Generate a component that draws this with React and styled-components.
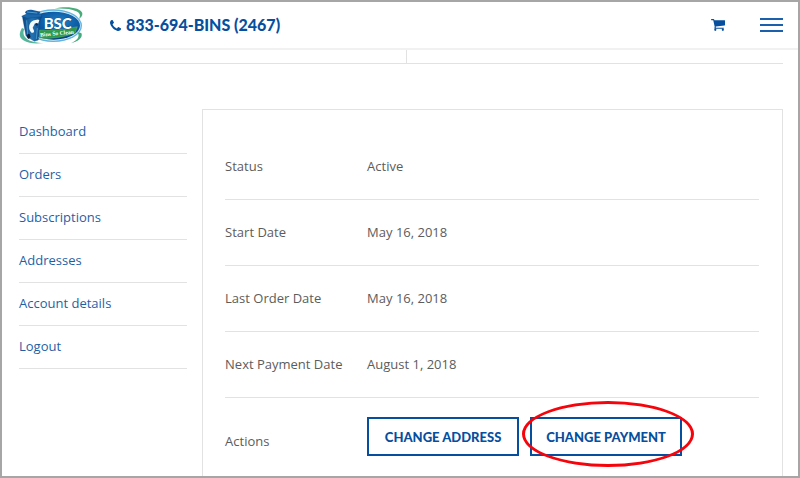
import React from "react";
import styled, { createGlobalStyle } from "styled-components";

const GlobalStyle = createGlobalStyle`
  * {
    box-sizing: border-box;
  }
  body {
    margin: 0;
    background-color: #fff;
    color: #5c5c5c;
    font-family: "Open Sans", "Noto Sans", sans-serif;
    font-size: 13px;
    line-height: 20px;
  }
`;

const Page = styled.div`
  display: flex;
  flex-direction: column;
  min-height: 100vh;
  border: 2px solid #a6a6a6;
`;

const Header = styled.header`
  display: flex;
  align-items: center;
  height: 48px;
  padding: 0 15px 0 17px;
  border-bottom: 2px solid #f1f1f1;
`;

const LogoLink = styled.a`
  display: flex;
  margin-right: 24px;
`;

const Phone = styled.a`
  display: flex;
  align-items: center;
  gap: 5px;
  color: #064f9e;
  font-family: Lato, sans-serif;
  font-size: 16px;
  font-weight: 900;
  text-decoration: none;
`;

const HeaderTools = styled.div`
  display: flex;
  align-items: center;
  gap: 35px;
  margin-left: auto;
`;

const CartLink = styled.a`
  display: flex;
  color: #064f9e;
`;

const MenuButton = styled.button`
  display: flex;
  flex-direction: column;
  gap: 4px;
  width: 23px;
  padding: 0;
  border: 0;
  background: none;
  cursor: pointer;
`;

const MenuBar = styled.span`
  height: 2px;
  background-color: #1a60aa;
`;

const Strip = styled.div`
  display: flex;
  height: 14px;
  margin: 0 15px 0 17px;
  border-bottom: 1px solid #e2e2e2;
`;

const StripCell = styled.div`
  width: calc(50% + 6px);
  border-right: 1px solid #e2e2e2;
`;

const Main = styled.main`
  display: flex;
  flex: 1;
  gap: 15px;
  padding: 45px 15px 0 17px;
`;

const Menu = styled.ul`
  flex: 0 0 22%;
  margin: 2px 0 0;
  padding: 0;
  list-style: none;
`;

const MenuItem = styled.li`
  height: 43px;
  padding-top: 10px;
  border-bottom: 1px solid #e2e2e2;
`;

const MenuLink = styled.a`
  color: #1f5fa6;
  text-decoration: none;
`;

const Card = styled.section`
  flex: 1;
  padding: 24px 23px 0 22px;
  border: 1px solid #e2e2e2;
  border-bottom: 0;
`;

const Details = styled.table`
  width: 100%;
  border-spacing: 0;
`;

const Label = styled.th`
  width: 142px;
  height: 66px;
  padding: ${({ $last }) => ($last ? "8px 0 0" : "0 0 2px")};
  border-bottom: ${({ $last }) => ($last ? "0" : "1px solid #e2e2e2")};
  font-weight: 400;
  text-align: left;
`;

const Value = styled.td`
  padding: ${({ $last }) => ($last ? "19px 0" : "0 0 2px")};
  border-bottom: ${({ $last }) => ($last ? "0" : "1px solid #e2e2e2")};
`;

const Actions = styled.div`
  display: flex;
  gap: 11px;
`;

const ActionButton = styled.button`
  width: 152px;
  height: 39px;
  padding: 0;
  border: 2px solid #064f9e;
  background-color: #fff;
  color: #064f9e;
  font-family: Lato, sans-serif;
  font-size: 13px;
  font-weight: 900;
  text-transform: uppercase;
  cursor: pointer;
`;

const Highlight = styled.div`
  position: relative;
`;

const Ring = styled.span`
  position: absolute;
  inset: -16px -12px -11px -8px;
  border: 3px solid #f5040c;
  border-radius: 50%;
  pointer-events: none;
`;

const Logo = () => (
  <svg width="67" height="41" viewBox="54 9 201 123" role="img" aria-label="BSC Bins So Clean">
    <defs>
      <radialGradient id="pool" cx="0.6" cy="0.35" r="0.7">
        <stop offset="0" stopColor="#1d83c9" />
        <stop offset="0.6" stopColor="#0b56a0" />
        <stop offset="1" stopColor="#063a78" />
      </radialGradient>
      <linearGradient id="bin" x1="0" x2="1">
        <stop offset="0" stopColor="#0a4583" />
        <stop offset="0.5" stopColor="#2374b5" />
        <stop offset="1" stopColor="#0c4a88" />
      </linearGradient>
    </defs>
    <ellipse cx="157" cy="71" rx="86" ry="49" fill="#62b4df" />
    <ellipse cx="157" cy="71" rx="82" ry="45" fill="#d3edf9" />
    <ellipse cx="158" cy="71" rx="79" ry="42" fill="url(#pool)" />
    <path d="M161 20c36-9 80-2 83 14 1 8-4 13-10 17 5-10 4-17-8-23-17-8-40-9-65-8z" fill="#48ad79" />
    <path d="M63 78c-10 17-9 29 4 37 16 10 39 11 61 8-21-1-40-4-51-13-10-8-12-18-7-29z" fill="#55b59a" />
    <path d="M229 91c9 13 1 24-19 33 18-5 38-16 31-31z" fill="#43aa7d" />
    <path d="M64 43l14-5 37-3 7 8-5 14-5 57-12 4-25-16z" fill="url(#bin)" stroke="#0b3d74" strokeWidth="1" />
    <path d="M62 43l16-8 42 1 2 8-43 5z" fill="#1d68ab" stroke="#0b3d74" strokeWidth="1" />
    <path d="M72 32c3-8 12-10 23-8l23 5-4 9-37-2z" fill="#1259a0" />
    <path d="M78 30l31 3" stroke="#73bddf" strokeWidth="2" />
    <path d="M103 54c-17 2-24 22-14 35 4 6 11 4 10-3l-4-9 7-13 8 5 5-14c-2-4-7-3-12-1z" fill="#f5fbfd" />
    <path d="M77 55l3 43M109 78l-3 33" stroke="#5baedb" strokeWidth="2" />
    <circle cx="107" cy="67" r="4" fill="#082f5f" />
    <ellipse cx="83" cy="103" rx="5" ry="8" fill="#101d34" />
    <path d="M116 84c38 2 76-1 113-10l-7 19c-34 12-69 19-108 15z" fill="#2d9a4b" stroke="#8fce64" strokeWidth="1" />
    <text x="128" y="81" fill="#fff" stroke="#07386f" strokeWidth="2" paintOrder="stroke" fontFamily="Lato, sans-serif" fontSize="45" fontWeight="900">BSC</text>
    <text x="118" y="104" fill="#fff" fontFamily="Liberation Serif, serif" fontSize="17" fontWeight="700" transform="rotate(-5 118 104)">Bins So Clean</text>
  </svg>
);

const PhoneIcon = () => (
  <svg width="11" height="11" viewBox="0 128 1408 1408" fill="currentColor" aria-hidden="true">
    <path d="M1408 1240q0 27-10 70.500t-21 68.500q-21 50-122 106-94 51-186 51-27 0-53-3.500t-57-12.500-47-14.500-55.500-20.500-49.500-18q-98-35-175-83-127-79-264-216t-216-264q-48-77-83-175-3-9-18-49.500t-20.500-55.500-14.500-47-12.500-57-3.500-53q0-92 51-186 56-101 106-122 25-11 68.500-21t70.500-10q14 0 21 3 18 6 53 76 11 19 30 54t35 63.500 31 53.500q3 4 17.500 25t21.500 35.500 7 28.500q0 20-28.500 50t-62 55-62 53-28.500 46q0 9 5 22.500t8.500 20.500 14 24 11.500 19q76 137 174 235t235 174q2 1 19 11.500t24 14 20.500 8.500 22.500 5q18 0 46-28.500t53-62 55-62 50-28.500q14 0 28.500 7t35.500 21.500 25 17.500q25 15 53.500 31t63.500 35 54 30q70 35 76 53 3 7 3 21z" />
  </svg>
);

const CartIcon = () => (
  <svg width="14" height="12" viewBox="0 256 1664 1408" fill="currentColor" aria-hidden="true">
    <path d="M640 1536q0 52-38 90t-90 38-90-38-38-90 38-90 90-38 90 38 38 90zm896 0q0 52-38 90t-90 38-90-38-38-90 38-90 90-38 90 38 38 90zm128-1088v512q0 24-16.500 42.500t-40.500 21.500l-1044 122q13 60 13 70 0 16-24 64h920q26 0 45 19t19 45-19 45-45 19h-1024q-26 0-45-19t-19-45q0-11 8-31.500t16-36 21.500-40 15.500-29.500l-177-823h-204q-26 0-45-19t-19-45 19-45 45-19h256q16 0 28.500 6.500t19.500 15.500 13 24.500 8 26 5.500 29.500 4.500 26h1201q26 0 45 19t19 45z" />
  </svg>
);

const links = ["Dashboard", "Orders", "Subscriptions", "Addresses", "Account details", "Logout"];

const details = [
  { label: "Status", value: "Active" },
  { label: "Start Date", value: "May 16, 2018" },
  { label: "Last Order Date", value: "May 16, 2018" },
  { label: "Next Payment Date", value: "August 1, 2018" },
];

export default function App() {
  return (
    <Page>
      <GlobalStyle />
      <Header>
        <LogoLink href="#">
          <Logo />
        </LogoLink>
        <Phone href="tel:8336942467">
          <PhoneIcon />
          833-694-BINS (2467)
        </Phone>
        <HeaderTools>
          <CartLink href="#cart" aria-label="Cart">
            <CartIcon />
          </CartLink>
          <MenuButton aria-label="Menu">
            <MenuBar />
            <MenuBar />
            <MenuBar />
          </MenuButton>
        </HeaderTools>
      </Header>
      <Strip>
        <StripCell />
      </Strip>
      <Main>
        <Menu>
          {links.map((link) => (
            <MenuItem key={link}>
              <MenuLink href="#">{link}</MenuLink>
            </MenuItem>
          ))}
        </Menu>
        <Card>
          <Details>
            <tbody>
              {details.map(({ label, value }) => (
                <tr key={label}>
                  <Label scope="row">{label}</Label>
                  <Value>{value}</Value>
                </tr>
              ))}
              <tr>
                <Label scope="row" $last>Actions</Label>
                <Value $last>
                  <Actions>
                    <ActionButton>Change Address</ActionButton>
                    <Highlight>
                      <ActionButton>Change Payment</ActionButton>
                      <Ring />
                    </Highlight>
                  </Actions>
                </Value>
              </tr>
            </tbody>
          </Details>
        </Card>
      </Main>
    </Page>
  );
}
